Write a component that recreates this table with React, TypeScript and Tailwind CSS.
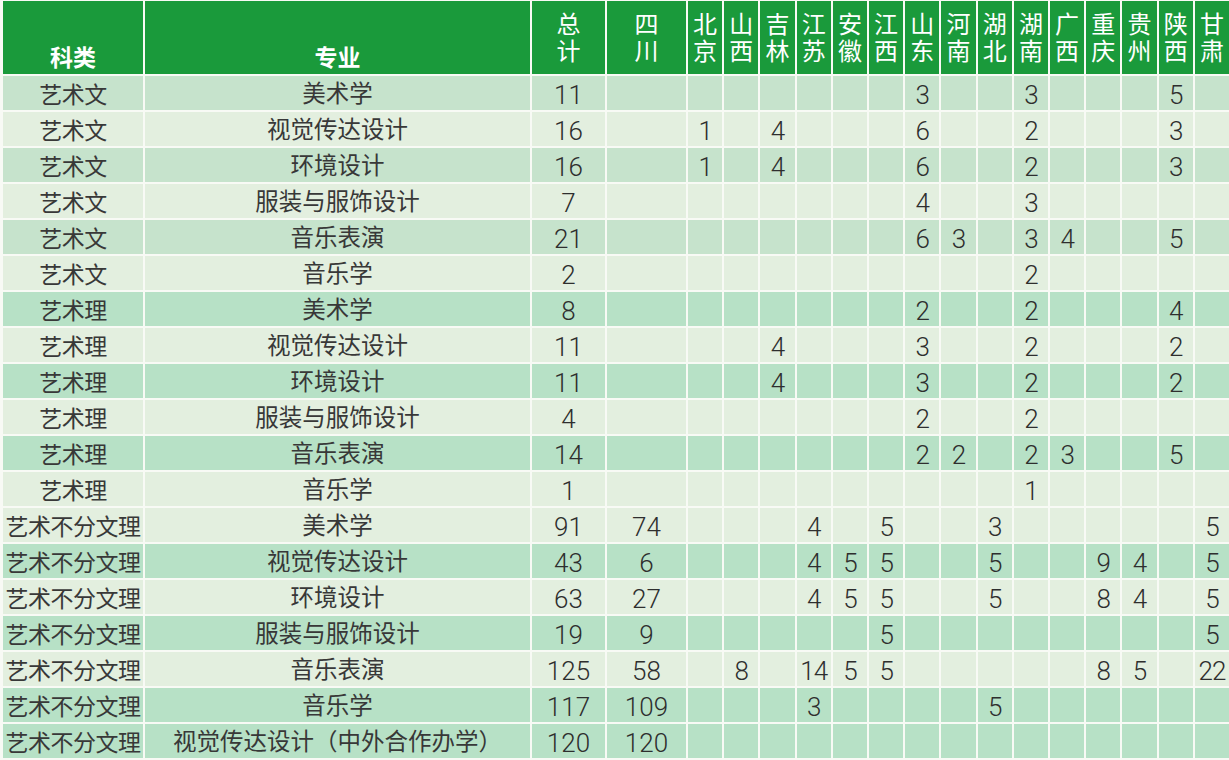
import React from 'react';

const provinces = ['北京', '山西', '吉林', '江苏', '安徽', '江西', '山东', '河南', '湖北', '湖南', '广西', '重庆', '贵州', '陕西', '甘肃'];

type Row = {
  kind: string;
  major: string;
  total: string;
  sichuan: string;
  counts: Record<string, string>;
  shade: 'dark' | 'light' | 'mint';
};

const rows: Row[] = [
  { kind: '艺术文', major: '美术学', total: '11', sichuan: '', counts: { 山东: '3', 湖南: '3', 陕西: '5' }, shade: 'dark' },
  { kind: '艺术文', major: '视觉传达设计', total: '16', sichuan: '', counts: { 北京: '1', 吉林: '4', 山东: '6', 湖南: '2', 陕西: '3' }, shade: 'light' },
  { kind: '艺术文', major: '环境设计', total: '16', sichuan: '', counts: { 北京: '1', 吉林: '4', 山东: '6', 湖南: '2', 陕西: '3' }, shade: 'dark' },
  { kind: '艺术文', major: '服装与服饰设计', total: '7', sichuan: '', counts: { 山东: '4', 湖南: '3' }, shade: 'light' },
  { kind: '艺术文', major: '音乐表演', total: '21', sichuan: '', counts: { 山东: '6', 河南: '3', 湖南: '3', 广西: '4', 陕西: '5' }, shade: 'dark' },
  { kind: '艺术文', major: '音乐学', total: '2', sichuan: '', counts: { 湖南: '2' }, shade: 'light' },
  { kind: '艺术理', major: '美术学', total: '8', sichuan: '', counts: { 山东: '2', 湖南: '2', 陕西: '4' }, shade: 'mint' },
  { kind: '艺术理', major: '视觉传达设计', total: '11', sichuan: '', counts: { 吉林: '4', 山东: '3', 湖南: '2', 陕西: '2' }, shade: 'light' },
  { kind: '艺术理', major: '环境设计', total: '11', sichuan: '', counts: { 吉林: '4', 山东: '3', 湖南: '2', 陕西: '2' }, shade: 'mint' },
  { kind: '艺术理', major: '服装与服饰设计', total: '4', sichuan: '', counts: { 山东: '2', 湖南: '2' }, shade: 'light' },
  { kind: '艺术理', major: '音乐表演', total: '14', sichuan: '', counts: { 山东: '2', 河南: '2', 湖南: '2', 广西: '3', 陕西: '5' }, shade: 'mint' },
  { kind: '艺术理', major: '音乐学', total: '1', sichuan: '', counts: { 湖南: '1' }, shade: 'light' },
  { kind: '艺术不分文理', major: '美术学', total: '91', sichuan: '74', counts: { 江苏: '4', 江西: '5', 湖北: '3', 甘肃: '5' }, shade: 'light' },
  { kind: '艺术不分文理', major: '视觉传达设计', total: '43', sichuan: '6', counts: { 江苏: '4', 安徽: '5', 江西: '5', 湖北: '5', 重庆: '9', 贵州: '4', 甘肃: '5' }, shade: 'mint' },
  { kind: '艺术不分文理', major: '环境设计', total: '63', sichuan: '27', counts: { 江苏: '4', 安徽: '5', 江西: '5', 湖北: '5', 重庆: '8', 贵州: '4', 甘肃: '5' }, shade: 'light' },
  { kind: '艺术不分文理', major: '服装与服饰设计', total: '19', sichuan: '9', counts: { 江西: '5', 甘肃: '5' }, shade: 'mint' },
  { kind: '艺术不分文理', major: '音乐表演', total: '125', sichuan: '58', counts: { 山西: '8', 江苏: '14', 安徽: '5', 江西: '5', 重庆: '8', 贵州: '5', 甘肃: '22' }, shade: 'light' },
  { kind: '艺术不分文理', major: '音乐学', total: '117', sichuan: '109', counts: { 江苏: '3', 湖北: '5' }, shade: 'mint' },
  { kind: '艺术不分文理', major: '视觉传达设计（中外合作办学）', total: '120', sichuan: '120', counts: {}, shade: 'mint' },
];

const shadeClass = {
  dark: 'bg-[#c6e3cc]',
  light: 'bg-[#e3efdf]',
  mint: 'bg-[#b7e1c6]',
};

const cjk = "[font-family:'Noto_Sans_CJK_SC',sans-serif]";
const num = "[font-family:Roboto,'Liberation_Sans',sans-serif] font-light";

export default function App() {
  return (
    <div className="w-[1229px] h-[760px] bg-[#f8faf5] pl-[3px] pt-[1px] overflow-hidden">
      <div className="grid grid-cols-[140px_385px_73px_79px_repeat(15,minmax(0,1fr))] grid-rows-[73px_repeat(19,34px)] gap-[2px]">
        {/* header */}
        <div className={`${cjk} bg-[#1a9a3b] text-white font-bold text-[23px] leading-none flex items-end justify-center pb-[6px]`}>科类</div>
        <div className={`${cjk} bg-[#1a9a3b] text-white font-bold text-[23px] leading-none flex items-end justify-center pb-[6px]`}>专业</div>
        {['总计', '四川', ...provinces].map((p) => (
          <div key={p} className={`${cjk} bg-[#1a9a3b] text-white text-[24px] leading-[27px] text-center pt-[8px]`}>
            {p[0]}
            <br />
            {p[1]}
          </div>
        ))}

        {rows.map((r, i) => {
          const bg = shadeClass[r.shade];
          return (
            <React.Fragment key={i}>
              <div className={`${cjk} ${bg} flex items-center justify-center text-[23px] text-[#383838] whitespace-nowrap tracking-[-0.5px]`}>
                {r.kind}
              </div>
              <div className={`${cjk} ${bg} flex items-center justify-center text-[23.5px] text-[#383838] whitespace-nowrap`}>
                {r.major}
              </div>
              <div className={`${num} ${bg} flex items-center justify-center text-[26px] text-[#2e2e2e] pt-[4px]`}>{r.total}</div>
              <div className={`${num} ${bg} flex items-center justify-center text-[26px] text-[#2e2e2e] pt-[4px]`}>{r.sichuan}</div>
              {provinces.map((p) => (
                <div key={p} className={`${num} ${bg} flex items-center justify-center text-[26px] text-[#2e2e2e] pt-[4px] tracking-[-1px]`}>
                  {r.counts[p] ?? ''}
                </div>
              ))}
            </React.Fragment>
          );
        })}
      </div>
    </div>
  );
}
